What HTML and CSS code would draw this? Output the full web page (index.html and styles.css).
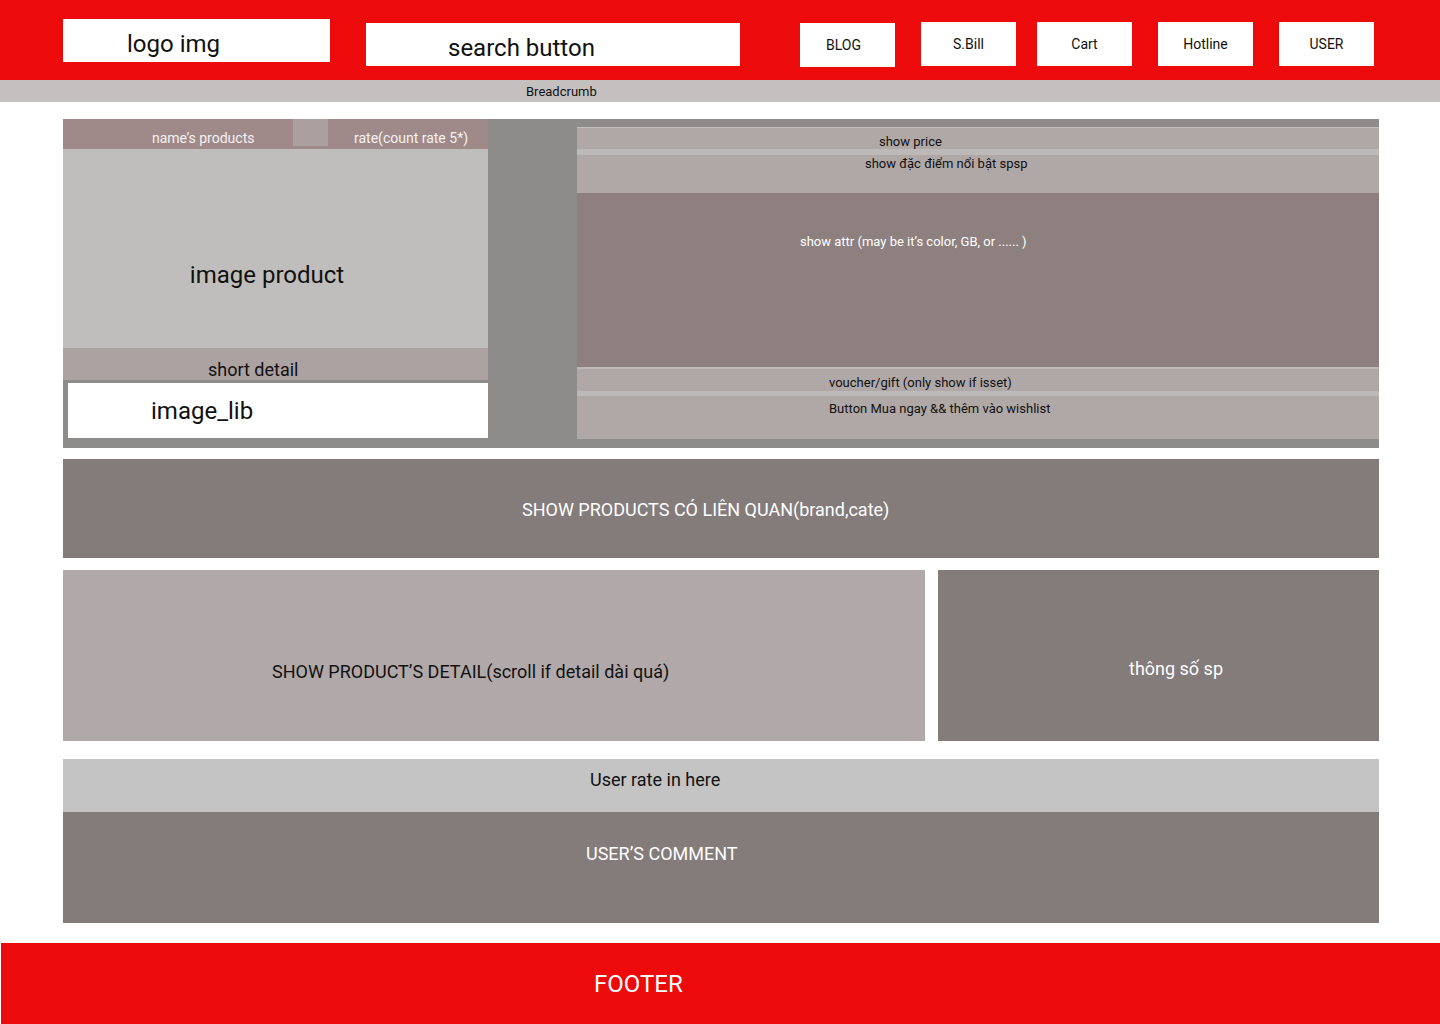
FILE: index.html
```html
<!DOCTYPE html>
<html lang="vi">
<head>
  <meta charset="UTF-8">
  <title>Chi tiết sản phẩm</title>
  <link rel="stylesheet" href="styles.css">
</head>
<body>

<!-- Header -->
<div class="header">
  <div class="logo">logo img</div>
  <div class="search">search button</div>
  <div class="menu">
    <div class="menu-item blog">BLOG</div>
    <div class="menu-item">S.Bill</div>
    <div class="menu-item cart">Cart</div>
    <div class="menu-item">Hotline</div>
    <div class="menu-item">USER</div>
  </div>
</div>

<div class="breadcrumb">Breadcrumb</div>

<div class="main">
  <!-- Sản phẩm -->
  <div class="product">
    <div class="product-left">
      <div class="name-bar">
        <span class="name">name’s products</span>
        <span class="square"></span>
        <span class="rate">rate(count rate 5*)</span>
      </div>
      <div class="image-product">image product</div>
      <div class="short-detail">short detail</div>
      <div class="image-lib">image_lib</div>
    </div>

    <div class="product-right">
      <div class="price">show price</div>
      <div class="highlight">show đặc điểm nổi bật spsp</div>
      <div class="attr">show attr (may be it’s color, GB, or ...... )</div>
      <div class="voucher">voucher/gift (only show if isset)</div>
      <div class="buy">Button Mua ngay &amp;&amp; thêm vào wishlist</div>
    </div>
  </div>

  <!-- Sản phẩm liên quan -->
  <div class="related">SHOW PRODUCTS CÓ LIÊN QUAN(brand,cate)</div>

  <div class="detail-row">
    <div class="detail">SHOW PRODUCT’S DETAIL(scroll if detail dài quá)</div>
    <div class="spec">thông số sp</div>
  </div>

  <!-- Đánh giá -->
  <div class="user-rate">User rate in here</div>
  <div class="comment">USER’S COMMENT</div>
</div>

<div class="footer">FOOTER</div>

</body>
</html>
```

FILE: styles.css
```css
body {
  margin: 0;
  background-color: white;
  color: #111;
  font-family: Roboto, 'Noto Sans', sans-serif;
}

.header {
  background-color: #ed0a0a;
  height: 80px;
  display: flex;
  align-items: flex-start;
  padding-left: 63px;
}

.logo {
  width: 267px;
  height: 43px;
  margin-top: 19px;
  background-color: white;
  font-size: 24px;
  line-height: 28px;
  padding: 11px 0 0 64px;
  box-sizing: border-box;
}

.search {
  width: 374px;
  height: 43px;
  margin: 23px 0 0 36px;
  background-color: white;
  font-size: 24px;
  line-height: 28px;
  padding: 11px 0 0 82px;
  box-sizing: border-box;
}

.menu {
  display: flex;
  gap: 26px;
  margin: 22px 0 0 60px;
}

.menu-item {
  width: 95px;
  height: 44px;
  background-color: white;
  font-size: 14px;
  display: flex;
  align-items: center;
  justify-content: center;
}

.menu-item.blog {
  margin-top: 1px;
  padding-right: 8px;
  box-sizing: border-box;
}

.menu-item.cart {
  margin-left: -5px;
}

.breadcrumb {
  height: 22px;
  line-height: 22px;
  background-color: #c5c0c0;
  font-size: 13px;
  padding: 1px 0 0 526px;
  box-sizing: border-box;
}

.main {
  margin: 17px 61px 0 63px;
}

.product {
  display: flex;
  height: 329px;
  background-color: #8e8c8a;
}

.product-left {
  width: 425px;
  display: flex;
  flex-direction: column;
}

.name-bar {
  height: 30px;
  background-color: #a08a89;
  display: flex;
  align-items: flex-start;
  color: #f4f1f1;
  font-size: 14px;
}

.name {
  width: 230px;
  padding: 8px 0 0 89px;
  line-height: 22px;
  box-sizing: border-box;
}

.square {
  width: 35px;
  height: 27px;
  background-color: #ab9f9f;
}

.rate {
  padding: 8px 0 0 26px;
  line-height: 22px;
}

.image-product {
  height: 199px;
  background-color: #c0bebc;
  font-size: 24px;
  display: flex;
  align-items: center;
  justify-content: center;
  padding: 52px 17px 0 0;
  box-sizing: border-box;
}

.short-detail {
  height: 32px;
  background-color: #aca2a2;
  font-size: 18px;
  line-height: 21px;
  padding: 11px 0 0 145px;
  box-sizing: border-box;
}

.image-lib {
  height: 55px;
  line-height: 57px;
  margin: 3px 0 0 5px;
  background-color: white;
  font-size: 24px;
  padding-left: 83px;
}

.product-right {
  flex: 1;
  margin-left: 89px;
  padding-top: 8px;
  display: flex;
  flex-direction: column;
  font-size: 13px;
  line-height: 16px;
}

.price,
.highlight,
.voucher,
.buy {
  background-color: #b0a8a7;
  box-sizing: border-box;
}

.price {
  height: 22px;
  border-top: 1px solid #c3bfbe;
  padding: 6px 0 0 302px;
}

.highlight {
  height: 44px;
  border-top: 6px solid #bdb9b8;
  padding: 1px 0 0 288px;
}

.attr {
  height: 174px;
  background-color: #8e807f;
  color: white;
  font-size: 13px;
  line-height: 16px;
  padding: 41px 0 0 223px;
  box-sizing: border-box;
}

.voucher {
  height: 24px;
  border-top: 2px solid #bdb9b8;
  padding: 6px 0 0 252px;
}

.buy {
  height: 48px;
  border-top: 5px solid #bdb9b8;
  padding: 5px 0 0 252px;
}

.related {
  margin-top: 11px;
  height: 99px;
  line-height: 101px;
  background-color: #847b7b;
  color: white;
  font-size: 18px;
  padding-left: 459px;
}

.detail-row {
  display: flex;
  gap: 13px;
  margin-top: 12px;
  height: 171px;
  font-size: 18px;
  line-height: 21px;
}

.detail {
  width: 862px;
  background-color: #b1a9a9;
  padding: 91px 0 0 209px;
  box-sizing: border-box;
}

.spec {
  flex: 1;
  background-color: #847b7b;
  color: white;
  padding: 88px 0 0 191px;
}

.user-rate {
  margin-top: 18px;
  height: 53px;
  background-color: #c4c4c4;
  font-size: 18px;
  line-height: 21px;
  padding: 10px 0 0 527px;
  box-sizing: border-box;
}

.comment {
  height: 111px;
  background-color: #847b7b;
  color: white;
  font-size: 18px;
  line-height: 21px;
  padding: 31px 0 0 523px;
  box-sizing: border-box;
}

.footer {
  margin: 20px 0 0 1px;
  height: 81px;
  background-color: #ed0a0a;
  color: white;
  font-size: 24px;
  line-height: 28px;
  padding: 27px 0 0 593px;
  box-sizing: border-box;
}
```
